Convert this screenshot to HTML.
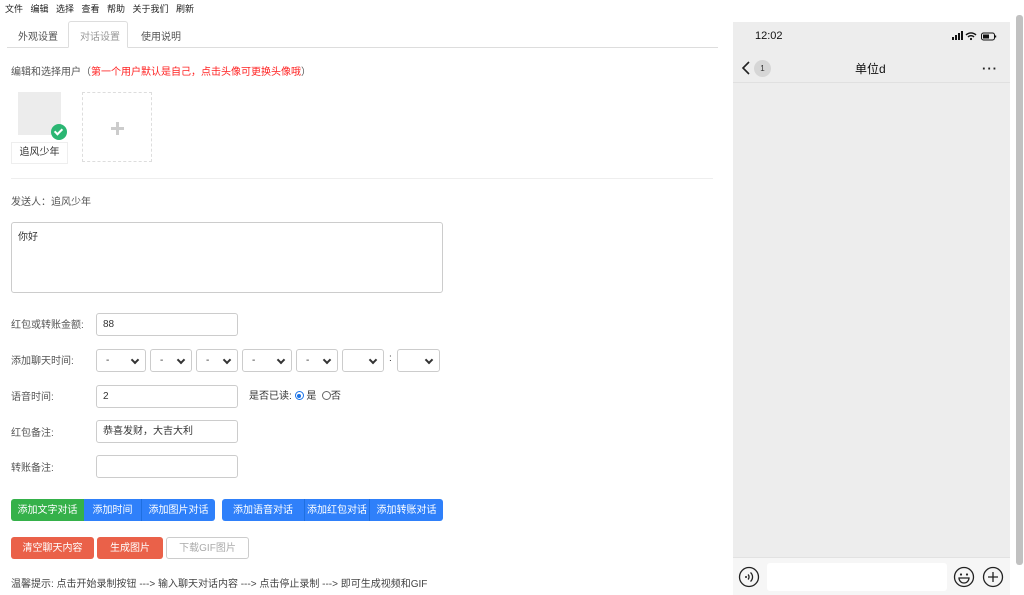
<!DOCTYPE html>
<html><head><meta charset="utf-8"><style>
*{box-sizing:border-box;margin:0;padding:0}
body{width:1024px;height:595px;position:relative;background:#fff;font-family:"Liberation Sans","Noto Sans CJK SC",sans-serif;font-size:10px;color:#333;overflow:hidden}
.a{position:absolute;white-space:nowrap}
.inp{position:absolute;border:1px solid #ccc;border-radius:3px;height:23px;background:#fff;padding-left:6px;line-height:22px;font-size:10px}
.sel{position:absolute;border:1px solid #ccc;border-radius:3px;height:23px;top:349px;background:#fff;line-height:21px;padding-left:9px}
.sel:after{content:"";position:absolute;right:7px;top:7px;width:4px;height:4px;border-right:2px solid #333;border-bottom:2px solid #333;transform:rotate(45deg)}
.btn{position:absolute;height:22px;line-height:23px;text-align:center;color:#fff;font-size:10px}
</style></head><body>
<div class="a" style="top:2px;left:5px;font-size:9px;color:#222;word-spacing:0">文件&nbsp;&nbsp; 编辑&nbsp;&nbsp; 选择&nbsp;&nbsp; 查看&nbsp;&nbsp; 帮助&nbsp;&nbsp; 关于我们&nbsp;&nbsp; 刷新</div>
<div class="a" style="top:47px;left:7px;width:711px;border-top:1px solid #ddd"></div>
<div class="a" style="top:21px;left:68px;width:60px;height:27px;border:1px solid #ddd;border-bottom:1px solid #fff;border-radius:3px 3px 0 0;background:#fff"></div>
<div class="a" style="top:28px;left:18px;color:#555">外观设置</div>
<div class="a" style="top:28px;left:80px;color:#999">对话设置</div>
<div class="a" style="top:28px;left:141px;color:#555">使用说明</div>
<div class="a" style="top:63px;left:11px;color:#555">编辑和选择用户（<span style="color:#f22">第一个用户默认是自己，点击头像可更换头像哦</span>）</div>
<div class="a" style="top:92px;left:18px;width:43px;height:43px;background:#ececec"></div>
<div class="a" style="top:124px;left:51px;width:16px;height:16px;border-radius:50%;background:#2bb673"><div style="position:absolute;left:5px;top:3px;width:5px;height:8px;border-right:2px solid #fff;border-bottom:2px solid #fff;transform:rotate(45deg)"></div></div>
<div class="a" style="top:142px;left:11px;width:57px;height:22px;border:1px solid #eee;text-align:center;line-height:20px">追风少年</div>
<div class="a" style="top:92px;left:82px;width:70px;height:70px;border:1px dashed #ddd"><div style="position:absolute;left:28px;top:34px;width:13px;height:3px;background:#ccc"></div><div style="position:absolute;left:33px;top:29px;width:3px;height:13px;background:#ccc"></div></div>
<div class="a" style="top:178px;left:11px;width:702px;border-top:1px solid #eee"></div>
<div class="a" style="top:193px;left:11px;color:#555">发送人：追风少年</div>
<div class="a" style="top:222px;left:11px;width:432px;height:71px;border:1px solid #ccc;border-radius:3px;padding:5px 6px">你好</div>
<div class="a" style="top:316px;left:11px;color:#555">红包或转账金额:</div>
<div class="inp" style="top:313px;left:96px;width:142px">88</div>
<div class="a" style="top:352px;left:11px;color:#555">添加聊天时间:</div>
<div class="sel" style="left:96px;width:50px">-</div>
<div class="sel" style="left:150px;width:42px">-</div>
<div class="sel" style="left:196px;width:42px">-</div>
<div class="sel" style="left:242px;width:50px">-</div>
<div class="sel" style="left:296px;width:42px">-</div>
<div class="sel" style="left:342px;width:42px"></div>
<div class="a" style="top:353px;left:389px">:</div>
<div class="sel" style="left:397px;width:43px"></div>
<div class="a" style="top:388px;left:11px;color:#555">语音时间:</div>
<div class="inp" style="top:385px;left:96px;width:142px">2</div>
<div class="a" style="top:387px;left:249px;color:#333">是否已读: <span style="display:inline-block;width:9px;height:9px;border-radius:50%;border:1px solid #1a73e8;vertical-align:-1px;position:relative"><span style="position:absolute;left:1.5px;top:1.5px;width:4px;height:4px;border-radius:50%;background:#1a73e8"></span></span> 是 &nbsp;<span style="display:inline-block;width:9px;height:9px;border-radius:50%;border:1px solid #666;vertical-align:-1px"></span>否</div>
<div class="a" style="top:424px;left:11px;color:#555">红包备注:</div>
<div class="inp" style="top:420px;left:96px;width:142px">恭喜发财，大吉大利</div>
<div class="a" style="top:459px;left:11px;color:#555">转账备注:</div>
<div class="inp" style="top:455px;left:96px;width:142px"></div>
<div class="btn" style="top:499px;left:11px;width:73px;background:#35b14a;border-radius:3px 0 0 3px">添加文字对话</div>
<div class="btn" style="top:499px;left:84px;width:58px;background:#2f80fa;border-right:1px solid #1f6fe0">添加时间</div>
<div class="btn" style="top:499px;left:142px;width:73px;background:#2f80fa;border-radius:0 3px 3px 0">添加图片对话</div>
<div class="btn" style="top:499px;left:222px;width:83px;background:#2f80fa;border-radius:3px 0 0 3px;border-right:1px solid #1f6fe0">添加语音对话</div>
<div class="btn" style="top:499px;left:305px;width:65px;background:#2f80fa;border-right:1px solid #1f6fe0">添加红包对话</div>
<div class="btn" style="top:499px;left:370px;width:73px;background:#2f80fa;border-radius:0 3px 3px 0">添加转账对话</div>
<div class="btn" style="top:537px;left:11px;width:83px;background:#ea6149;border-radius:3px">清空聊天内容</div>
<div class="btn" style="top:537px;left:97px;width:66px;background:#ea6149;border-radius:3px">生成图片</div>
<div class="btn" style="top:537px;left:166px;width:83px;background:#fff;border:1px solid #ccc;color:#aaa;border-radius:3px;line-height:21px">下载GIF图片</div>
<div class="a" style="top:575px;left:11px;color:#444">温馨提示: 点击开始录制按钮 ---&gt; 输入聊天对话内容 ---&gt; 点击停止录制 ---&gt; 即可生成视频和GIF</div>
<!-- phone -->
<div class="a" style="top:22px;left:733px;width:277px;height:573px;background:#ededed"></div>
<div class="a" style="top:30px;left:755px;font-size:11px;color:#111">12:02</div>
<svg class="a" style="top:31px;left:952px" width="48" height="10" viewBox="0 0 48 10"><rect x="0" y="6" width="2" height="3" fill="#111"/><rect x="3" y="4" width="2" height="5" fill="#111"/><rect x="6" y="2" width="2" height="7" fill="#111"/><rect x="9" y="0" width="2" height="9" fill="#111"/><path d="M14 4a7 7 0 0 1 10 0M16 6a4 4 0 0 1 6 0" stroke="#111" stroke-width="1.4" fill="none"/><circle cx="19" cy="8" r="1.1" fill="#111"/><rect x="29.5" y="2" width="13" height="7" rx="2" stroke="#111" fill="none"/><rect x="31" y="3.5" width="6" height="4" fill="#111"/><rect x="43" y="4.5" width="1.2" height="2" fill="#111"/></svg>
<svg class="a" style="top:61px;left:741px" width="10" height="14"><path d="M8 1L2 7l6 6" stroke="#222" stroke-width="1.6" fill="none"/></svg>
<div class="a" style="top:60px;left:754px;width:17px;height:17px;border-radius:50%;background:#d6d6d6;font-size:8px;text-align:center;line-height:17px;color:#333">1</div>
<div class="a" style="top:60px;left:855px;font-size:12px;color:#111">单位d</div>
<div class="a" style="top:61px;left:982px;font-size:13px;color:#222;letter-spacing:1px;font-weight:bold">···</div>
<div class="a" style="top:82px;left:733px;width:277px;border-top:1px solid #e0e0e0"></div>
<div class="a" style="top:557px;left:733px;width:277px;height:38px;background:#f6f6f6;border-top:1px solid #e2e2e2"></div>
<div class="a" style="top:563px;left:767px;width:180px;height:28px;background:#fff;border-radius:3px"></div>
<svg class="a" style="top:566px;left:738px" width="22" height="22"><circle cx="11" cy="11" r="9.5" stroke="#222" stroke-width="1.3" fill="none"/><circle cx="8" cy="11" r="1" fill="#222"/><path d="M10 8.5a3.5 3.5 0 0 1 0 5M12.5 6.5a6 6 0 0 1 0 9" stroke="#222" stroke-width="1.3" fill="none"/></svg>
<svg class="a" style="top:566px;left:953px" width="22" height="22"><circle cx="11" cy="11" r="9.5" stroke="#222" stroke-width="1.3" fill="none"/><circle cx="8" cy="8.5" r="1.1" fill="#222"/><circle cx="14" cy="8.5" r="1.1" fill="#222"/><path d="M6 12h10a5 5 0 0 1-10 0z" stroke="#222" stroke-width="1.3" fill="none"/></svg>
<svg class="a" style="top:566px;left:982px" width="22" height="22"><circle cx="11" cy="11" r="9.5" stroke="#222" stroke-width="1.3" fill="none"/><path d="M11 6v10M6 11h10" stroke="#222" stroke-width="1.3"/></svg>
<div class="a" style="top:15px;left:1016px;width:7px;height:550px;background:#c1c1c1;border-radius:3px"></div>
</body></html>
